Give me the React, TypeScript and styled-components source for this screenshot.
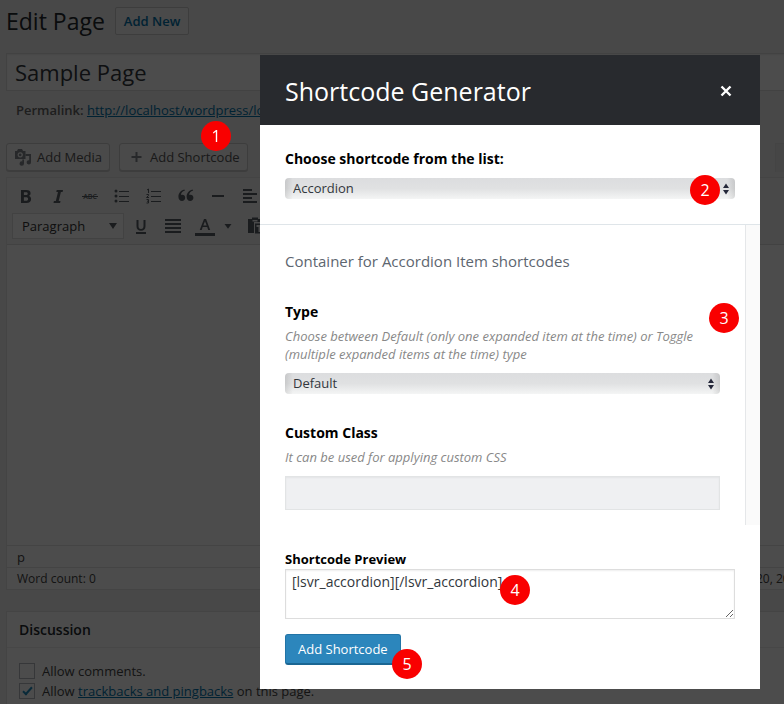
import React from "react";
import styled, { createGlobalStyle, css } from "styled-components";

const GlobalStyle = createGlobalStyle`
  *, *::before, *::after { box-sizing: border-box; }
  body { margin: 0; background: #f1f1f1; overflow: hidden; }
  body, button, input, select, textarea { font-family: "Open Sans", "Noto Sans", sans-serif; }
  button, input, select, textarea { margin: 0; }
`;

const Page = styled.div`
  display: flex;
  flex-direction: column;
  min-height: 100vh;
  padding: 7px 0 0 6px;
  overflow: hidden;
  font-size: 13px;
  line-height: 18px;
  color: #444;
`;

const Heading = styled.div`
  display: flex;
  align-items: center;
  gap: 10px;
  height: 28px;
`;

const PageTitle = styled.h1`
  margin: 0;
  font-size: 23px;
  font-weight: 400;
  line-height: 28px;
  color: #23282d;
`;

const AddNewLink = styled.a`
  padding: 4px 8px;
  border: 1px solid #ccc;
  border-radius: 2px;
  background: #f7f7f7;
  font-weight: 600;
  text-decoration: none;
  color: #0073aa;
`;

const TitleInput = styled.input`
  width: 100%;
  height: 38px;
  margin-top: 18px;
  padding: 3px 8px;
  border: 1px solid #ddd;
  border-right: 0;
  background: #fff;
  font-size: 22px;
  color: #32373c;
  box-shadow: inset 0 1px 2px rgba(0, 0, 0, 0.07);
`;

const Permalink = styled.p`
  margin: 10px 0 0 10px;
  white-space: nowrap;
  color: #666;
`;

const Strong = styled.strong`
  font-weight: 600;
`;

const BlueLink = styled.a`
  color: #0073aa;
`;

const EditorTools = styled.div`
  display: flex;
  gap: 9px;
  margin-top: 24px;
  height: 28px;
`;

const ToolButton = styled.button`
  display: flex;
  align-items: center;
  gap: 5px;
  height: 28px;
  padding: 0 7px;
  border: 1px solid #ccc;
  border-radius: 3px;
  background: #f7f7f7;
  font-size: 13px;
  color: #555;
  white-space: nowrap;
  box-shadow: 0 1px 0 #ccc;
`;

const TextTab = styled.div`
  margin-left: auto;
  width: 9px;
  height: 29px;
  border: 1px solid #e5e5e5;
  border-width: 1px 0 0 1px;
  background: #ebebeb;
`;

const Editor = styled.section`
  margin-top: 6px;
  border: 1px solid #e5e5e5;
  border-right: 0;
  background: #fff;
`;

const Toolbar = styled.div`
  display: flex;
  flex-direction: column;
  gap: 2px;
  padding: 4px 3px;
  border-bottom: 1px solid #ddd;
  background: #f5f5f5;
`;

const ToolbarRow = styled.div`
  display: flex;
  align-items: center;
  height: 28px;
`;

const iconButton = css`
  display: flex;
  align-items: center;
  justify-content: center;
  flex: none;
  height: 28px;
  padding: 0;
  border: 0;
  background: none;
`;

const IconButton = styled.button<{ $width?: number }>`
  ${iconButton}
  width: ${(p) => p.$width ?? 32}px;
`;

const FormatSelect = styled.span`
  display: grid;
  width: 112px;
  margin: 0 1px 0 2px;
`;

const FormatControl = styled.select`
  grid-area: 1 / 1;
  appearance: none;
  height: 26px;
  padding: 0 9px;
  border: 1px solid #ddd;
  border-radius: 0;
  background: #fff;
  font-size: 13px;
  color: #333;
`;

const FormatCaret = styled.svg`
  grid-area: 1 / 1;
  place-self: center end;
  margin-right: 7px;
  pointer-events: none;
`;

const EditorBody = styled.div`
  height: 300px;
`;

const StatusRow = styled.div`
  display: flex;
  align-items: center;
  justify-content: space-between;
  height: 22px;
  padding: 0 0 0 10px;
  border-top: 1px solid #e5e5e5;
  font-size: 12px;
  white-space: nowrap;
`;

const EditedOn = styled.span`
  width: 44px;
  flex: none;
  overflow: hidden;
  padding-left: 16px;
`;

const PathRow = styled(StatusRow)`
  font-size: 13px;
`;

const MetaBox = styled.section`
  flex: 1;
  margin-top: 21px;
  border: 1px solid #e5e5e5;
  border-width: 1px 0 0 1px;
  background: #fff;
`;

const MetaTitle = styled.h2`
  margin: 0;
  padding: 9px 12px 8px;
  border-bottom: 1px solid #eee;
  font-size: 14px;
  line-height: 18px;
  font-weight: 600;
  color: #23282d;
`;

const MetaBody = styled.div`
  display: flex;
  flex-direction: column;
  gap: 2px;
  padding: 14px 12px 0;
`;

const CheckLabel = styled.label`
  display: flex;
  align-items: center;
  gap: 7px;
  white-space: nowrap;
`;

const Check = styled.input`
  appearance: none;
  width: 16px;
  height: 16px;
  border: 1px solid #b4b9be;
  background: #fff;
  display: grid;
  place-items: center;
  &:checked::after {
    content: "";
    width: 5px;
    height: 10px;
    margin-bottom: 3px;
    border: solid #1e8cbe;
    border-width: 0 2px 2px 0;
    transform: rotate(42deg);
  }
`;

const Overlay = styled.div`
  position: fixed;
  inset: 0;
  display: flex;
  justify-content: flex-end;
  align-items: flex-start;
  padding: 55px 24px 0;
  background: rgba(0, 0, 0, 0.7);
`;

const Dialog = styled.div`
  position: relative;
  width: 100%;
  max-width: 500px;
  background: #fff;
  color: #000;
`;

const DialogHeader = styled.header`
  display: flex;
  align-items: center;
  justify-content: space-between;
  height: 70px;
  padding: 1px 25px 0;
  background: #282a2e;
`;

const DialogTitle = styled.h2`
  margin: 0;
  font-size: 25px;
  font-weight: 400;
  line-height: 34px;
  color: #fff;
`;

const CloseButton = styled.button`
  ${iconButton}
  width: 18px;
`;

const Chooser = styled.div`
  display: flex;
  flex-direction: column;
  gap: 9px;
  padding: 24px 25px 25px;
  border-bottom: 1px solid #dfe5e9;
`;

const FieldLabel = styled.label<{ $size?: number }>`
  font-size: ${(p) => p.$size ?? 14}px;
  font-weight: 700;
  line-height: 20px;
`;

const SelectWrap = styled.span`
  display: grid;
`;

const SelectControl = styled.select`
  grid-area: 1 / 1;
  appearance: none;
  width: 100%;
  height: 21px;
  padding: 0 8px 2px;
  border: 0;
  border-radius: 4px;
  background: linear-gradient(90deg, rgba(0, 0, 0, 0.1), transparent 8px, transparent calc(100% - 8px), rgba(0, 0, 0, 0.1)),
    linear-gradient(#dcdddf, #e0e1e2 50%, #f4f5f5);
  font-size: 13px;
  color: #32373c;
`;

const SelectArrows = styled.svg`
  grid-area: 1 / 1;
  place-self: center end;
  margin-right: 5px;
  pointer-events: none;
`;

const Settings = styled.div`
  display: flex;
  height: 300px;
`;

const SettingsContent = styled.div`
  flex: 1;
  min-width: 0;
  padding: 25px 25px 0;
`;

const ScrollTrack = styled.div`
  width: 15px;
  border-left: 1px solid #e5e7e9;
  background: #fafafa;
`;

const Intro = styled.p`
  margin: 0 0 30px;
  font-size: 15px;
  line-height: 22px;
  color: #5d6670;
`;

const Field = styled.div`
  display: flex;
  flex-direction: column;
  margin-bottom: 29px;
`;

const Hint = styled.p`
  margin: 5px 0 10px;
  font-size: 13px;
  line-height: 18px;
  font-style: italic;
  color: #888;
`;

const TextInput = styled.input`
  width: 100%;
  height: 34px;
  padding: 4px 8px;
  border: 1px solid #e2e4e5;
  background: #eff0f2;
  box-shadow: inset 0 1px 2px rgba(0, 0, 0, 0.05);
`;

const DialogFooter = styled.footer`
  display: flex;
  flex-direction: column;
  align-items: flex-start;
  padding: 24px 25px;
`;

const Preview = styled.textarea`
  display: block;
  width: 100%;
  height: 50px;
  margin: 0 0 15px;
  padding: 2px 6px;
  border: 1px solid #ddd;
  background: #fff;
  font-size: 14px;
  line-height: 20px;
  color: #32373c;
  resize: vertical;
  box-shadow: inset 0 1px 2px rgba(0, 0, 0, 0.07);
`;

const PrimaryButton = styled.button`
  height: 31px;
  padding: 0 12px;
  border: 1px solid #2274a6;
  border-bottom: 2px solid #1a6693;
  border-radius: 3px;
  background: #2c86bc;
  font-size: 13px;
  white-space: nowrap;
  color: #fff;
`;

const Marker = styled.span<{ $left: number; $top: number }>`
  position: absolute;
  left: ${(p) => p.$left}px;
  top: ${(p) => p.$top}px;
  display: grid;
  place-items: center;
  width: 30px;
  height: 30px;
  border-radius: 50%;
  background: #f90000;
  font-size: 16px;
  line-height: 22px;
  color: #fff;
  pointer-events: none;
`;

const INK = "#595f66";

const Glyph = ({ children, size = 20 }: { children: React.ReactNode; size?: number }) => (
  <svg width={size} height={size} viewBox="0 0 20 20" fill={INK} aria-hidden="true">
    {children}
  </svg>
);

const glyphs = {
  bold: <path fillRule="evenodd" d="M5 4h5.200c3 0 4.400 1.100 4.400 3.200 0 1.400-.7 2.300-1.900 2.700 1.600.3 2.400 1.400 2.400 3 0 2.500-1.700 4.100-4.600 4.100H5zm2.900 2.200v2.900h2c1.200 0 1.800-.5 1.800-1.500s-.6-1.400-1.800-1.400zm0 5v3.500h2.200c1.300 0 2-.6 2-1.800s-.7-1.700-2-1.700z" />,
  italic: <path d="M8.700 4h6.300l-.4 2h-1.700l-2.200 9h1.800l-.4 2H5.500l.4-2h1.900l2.200-9H8.300z" />,
  bullets: (
    <>
      <circle cx="4" cy="5" r="1.500" />
      <circle cx="4" cy="10" r="1.500" />
      <circle cx="4" cy="15" r="1.500" />
      <path d="M7 5h10v1H7zM7 10h10v1H7zM7 15h10v1H7z" />
    </>
  ),
  numbers: (
    <>
      <path d="M7 5h10v1H7zM7 10h10v1H7zM7 15h10v1H7z" />
      <path fill="none" stroke={INK} d="M3 4l1.500-1v4M2.500 8.500h2v1l-2 2h2.500M2.500 13.500h2v3.500h-2M3 15.200h1.500" />
    </>
  ),
  quote: <path d="M9 4.500C6.300 5.400 5 7 5 9c.4-.2.900-.3 1.400-.3C8 8.700 9.200 10 9.200 11.700S7.900 15 6 15c-2.200 0-3.600-1.600-3.600-4.200C2.400 7.200 4.600 4.600 8.300 3.500zM17.200 4.500c-2.700.9-4 2.500-4 4.500.4-.2.900-.3 1.400-.3 1.600 0 2.800 1.300 2.800 3S16.100 15 14.200 15c-2.200 0-3.600-1.600-3.600-4.200 0-3.600 2.200-6.200 5.900-7.300z" />,
  rule: <path d="M4 9h12v2H4z" />,
  left: <path d="M3 3h9v2H3zM3 7h14v2H3zM3 11h9v2H3zM3 15h14v2H3z" />,
  underline: <path d="M5.500 4h2v6c0 2 .8 3 2.500 3s2.500-1 2.500-3V4h2v6.200c0 2.900-1.600 4.500-4.500 4.500s-4.500-1.600-4.500-4.500zM5 16h10v2H5z" />,
  justify: <path d="M2 3h16v2H2zM2 7h16v2H2zM2 11h16v2H2zM2 15h16v2H2z" />,
  color: <path fillRule="evenodd" d="M9 3h2.100l4.100 11h-2l-1-2.900H7.700l-1 2.900h-2zm1 2.200L8.300 9.500h3.400zM0 17h20v3H0z" />,
  paste: <path fillRule="evenodd" d="M3 3h4V1.500h6V3h3v3H9v11H3zm4.500 1v1.500h5V4zM10 7.500h9v10h-9zm1.500 1.500v2h2v5h2v-5h2V9z" />,
  caret: <path d="M5 7h10l-5 7z" />,
};

const StrikeIcon = () => (
  <svg width="20" height="20" viewBox="0 0 20 20" aria-hidden="true">
    <text x="10" y="13" textAnchor="middle" fontFamily="Open Sans" fontWeight="600" fontSize="7" fill={INK}>
      ABC
    </text>
    <path d="M2 10.500h16" stroke={INK} />
  </svg>
);

const MediaIcon = () => (
  <svg width="18" height="18" viewBox="0 0 18 18" fill="#82878c" aria-hidden="true">
    <path fillRule="evenodd" d="M1 3h2l1-2h4l1 2h2.500v8H1zm5.200 1.200a2.700 2.700 0 1 0 .1 0zm0 1.300a1.400 1.400 0 1 1-.1 0z" />
    <path d="M11.500 6H17v8.300a2.200 2.200 0 1 1-1.800-2.100V8h-3.700zM10 11.500v4a2.200 2.200 0 1 1-1.700-2.100v-1.900z" />
  </svg>
);

const Arrows = () => (
  <SelectArrows width="8" height="12" viewBox="0 0 8 12" fill="#25283a" aria-hidden="true">
    <path d="M4 0.500L7 5H1zM4 11.500L7 7H1z" />
  </SelectArrows>
);

const firstRow: [string, React.ReactNode][] = [
  ["Bold", <Glyph>{glyphs.bold}</Glyph>],
  ["Italic", <Glyph>{glyphs.italic}</Glyph>],
  ["Strikethrough", <StrikeIcon />],
  ["Bulleted list", <Glyph>{glyphs.bullets}</Glyph>],
  ["Numbered list", <Glyph>{glyphs.numbers}</Glyph>],
  ["Blockquote", <Glyph>{glyphs.quote}</Glyph>],
  ["Horizontal line", <Glyph>{glyphs.rule}</Glyph>],
  ["Align left", <Glyph>{glyphs.left}</Glyph>],
];

const secondRow: [string, React.ReactNode, number][] = [
  ["Underline", <Glyph>{glyphs.underline}</Glyph>, 32],
  ["Justify", <Glyph>{glyphs.justify}</Glyph>, 32],
  ["Text color", <Glyph>{glyphs.color}</Glyph>, 32],
  ["More colors", <Glyph size={16}>{glyphs.caret}</Glyph>, 14],
  ["Paste as text", <Glyph>{glyphs.paste}</Glyph>, 40],
];

export default function App() {
  return (
    <>
      <GlobalStyle />
      <Page>
        <Heading>
          <PageTitle>Edit Page</PageTitle>
          <AddNewLink href="#new">Add New</AddNewLink>
        </Heading>
        <TitleInput aria-label="Page title" defaultValue="Sample Page" />
        <Permalink>
          <Strong>Permalink:</Strong> <BlueLink href="#permalink">http://localhost/wordpress/lo</BlueLink>
        </Permalink>
        <EditorTools>
          <ToolButton type="button">
            <MediaIcon />
            Add Media
          </ToolButton>
          <ToolButton type="button">
            <svg width="18" height="18" viewBox="0 0 18 18" aria-hidden="true">
              <path d="M9.500 4v10M4.500 9h10" stroke="#82878c" strokeWidth="2" />
            </svg>
            Add Shortcode
          </ToolButton>
          <TextTab />
        </EditorTools>
        <Editor>
          <Toolbar>
            <ToolbarRow>
              {firstRow.map(([name, icon]) => (
                <IconButton key={name} type="button" aria-label={name}>
                  {icon}
                </IconButton>
              ))}
            </ToolbarRow>
            <ToolbarRow>
              <FormatSelect>
                <FormatControl aria-label="Format">
                  <option>Paragraph</option>
                </FormatControl>
                <FormatCaret width="8" height="6" viewBox="0 0 8 6" fill={INK}>
                  <path d="M0 0h8L4 6z" />
                </FormatCaret>
              </FormatSelect>
              {secondRow.map(([name, icon, width]) => (
                <IconButton key={name} type="button" aria-label={name} $width={width}>
                  {icon}
                </IconButton>
              ))}
            </ToolbarRow>
          </Toolbar>
          <EditorBody />
          <PathRow>p</PathRow>
          <StatusRow>
            <span>Word count: 0</span>
            <EditedOn>20, 2015</EditedOn>
          </StatusRow>
        </Editor>
        <MetaBox>
          <MetaTitle>Discussion</MetaTitle>
          <MetaBody>
            <CheckLabel>
              <Check type="checkbox" />
              <span>Allow comments.</span>
            </CheckLabel>
            <CheckLabel>
              <Check type="checkbox" defaultChecked />
              <span>
                Allow <BlueLink href="#trackbacks">trackbacks and pingbacks</BlueLink> on this page.
              </span>
            </CheckLabel>
          </MetaBody>
        </MetaBox>
      </Page>

      <Overlay>
        <Marker $left={201} $top={121}>1</Marker>
        <Dialog role="dialog" aria-labelledby="dialog-title">
          <DialogHeader>
            <DialogTitle id="dialog-title">Shortcode Generator</DialogTitle>
            <CloseButton type="button" aria-label="Close">
              <svg width="12" height="12" viewBox="0 0 12 12" aria-hidden="true">
                <path d="M1.500 1.500l9 9M10.500 1.500l-9 9" stroke="#fff" strokeWidth="2.400" />
              </svg>
            </CloseButton>
          </DialogHeader>
          <Chooser>
            <FieldLabel htmlFor="shortcode">Choose shortcode from the list:</FieldLabel>
            <SelectWrap>
              <SelectControl id="shortcode">
                <option>Accordion</option>
              </SelectControl>
              <Arrows />
            </SelectWrap>
          </Chooser>
          <Settings>
            <SettingsContent>
              <Intro>Container for Accordion Item shortcodes</Intro>
              <Field>
                <FieldLabel htmlFor="type">Type</FieldLabel>
                <Hint>
                  Choose between Default (only one expanded item at the time) or Toggle (multiple expanded items at the
                  time) type
                </Hint>
                <SelectWrap>
                  <SelectControl id="type">
                    <option>Default</option>
                  </SelectControl>
                  <Arrows />
                </SelectWrap>
              </Field>
              <Field>
                <FieldLabel htmlFor="custom-class">Custom Class</FieldLabel>
                <Hint>It can be used for applying custom CSS</Hint>
                <TextInput id="custom-class" />
              </Field>
            </SettingsContent>
            <ScrollTrack />
          </Settings>
          <DialogFooter>
            <FieldLabel htmlFor="preview" $size={13}>
              Shortcode Preview
            </FieldLabel>
            <Preview id="preview" defaultValue="[lsvr_accordion][/lsvr_accordion]" />
            <PrimaryButton type="button">Add Shortcode</PrimaryButton>
          </DialogFooter>
          <Marker $left={430} $top={120}>2</Marker>
          <Marker $left={449} $top={248}>3</Marker>
          <Marker $left={240} $top={520}>4</Marker>
          <Marker $left={132} $top={594}>5</Marker>
        </Dialog>
      </Overlay>
    </>
  );
}
